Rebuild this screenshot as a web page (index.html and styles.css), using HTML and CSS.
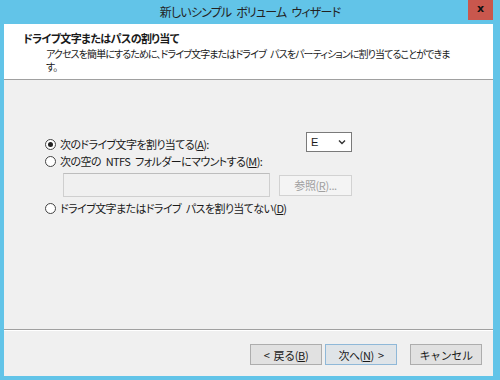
FILE: index.html
```html
<!DOCTYPE html>
<html lang="ja">
<head>
  <meta charset="UTF-8">
  <title>新しいシンプル ボリューム ウィザード</title>
  <link rel="stylesheet" href="styles.css">
</head>
<body>
  <div class="window">
    <div class="titlebar">
      <span></span>
      <span class="title">新しいシンプル ボリューム ウィザード</span>
      <span class="close">x</span>
    </div>
    <div class="content">
      <header class="page-head">
        <h1>ドライブ文字またはパスの割り当て</h1>
        <p>アクセスを簡単にするために、ドライブ文字またはドライブ パスをパーティションに割り当てることができます。</p>
      </header>
      <main class="options">
        <div class="row row-letter">
          <label class="opt"><span class="radio checked"></span>次のドライブ文字を割り当てる(<u>A</u>):</label>
          <div class="select">E<svg width="8" height="6" viewBox="0 0 8 6"><path d="M1 1.5 L4 4.5 L7 1.5" fill="none" stroke="#333" stroke-width="1.4"/></svg></div>
        </div>
        <div class="row">
          <label class="opt"><span class="radio"></span>次の空の NTFS フォルダーにマウントする(<u>M</u>):</label>
        </div>
        <div class="row row-path">
          <div class="field"></div>
          <button class="btn disabled">参照(<u>R</u>)...</button>
        </div>
        <div class="row row-none">
          <label class="opt"><span class="radio"></span>ドライブ文字またはドライブ パスを割り当てない(<u>D</u>)</label>
        </div>
      </main>
      <footer class="actions">
        <button class="btn">&lt; 戻る(<u>B</u>)</button>
        <button class="btn default">次へ(<u>N</u>) &gt;</button>
        <button class="btn cancel">キャンセル</button>
      </footer>
    </div>
  </div>
</body>
</html>
```

FILE: styles.css
```css
body {
  margin: 0;
  font-family: "Noto Sans CJK JP", "Noto Sans", sans-serif;
  font-feature-settings: "palt";
  color: #1a1a1a;
}

.window {
  width: 500px;
  height: 380px;
  background-color: #62c4e8;
  padding: 0 7px 4px 4px;
  box-sizing: border-box;
  display: flex;
  flex-direction: column;
}

.titlebar {
  height: 24px;
  display: grid;
  grid-template-columns: 1fr auto 1fr;
  align-items: start;
  margin-left: -4px;
  margin-right: -7px;
}

.title {
  font-size: 12px;
  letter-spacing: -0.8px;
  word-spacing: 3px;
  line-height: 24px;
  color: #222;
}

.close {
  justify-self: end;
  margin-right: 7px;
  width: 25px;
  height: 20px;
  background-color: #c9574d;
  color: #111;
  font-family: "DejaVu Sans", sans-serif;
  font-weight: bold;
  font-size: 11px;
  line-height: 18px;
  text-align: center;
}

.content {
  flex: 1;
  display: flex;
  flex-direction: column;
  background-color: #f0f0f0;
}

.page-head {
  background-color: #fff;
  height: 56px;
  padding: 7px 0 0 19px;
  box-sizing: border-box;
  border-bottom: 1px solid #a0a0a0;
}

.page-head h1 {
  margin: 0;
  font-size: 11px;
  letter-spacing: -0.6px;
  line-height: 15px;
  font-weight: bold;
}

.page-head p {
  margin: 1px 0 0 23px;
  width: 404px;
  font-size: 10px;
  letter-spacing: -0.9px;
  word-spacing: 3px;
  line-height: 13px;
}

.options {
  flex: 1;
  padding: 52px 0 0 41px;
  font-size: 11px;
  letter-spacing: -0.6px;
  word-spacing: 3px;
}

.row {
  display: flex;
  align-items: center;
}

.row-letter {
  height: 20px;
}

.row-letter .opt {
  width: 261px;
  padding-top: 4px;
}

.opt {
  display: flex;
  align-items: center;
  line-height: 16px;
  height: 16px;
}

.radio {
  width: 9px;
  height: 9px;
  border: 1px solid #444;
  border-radius: 50%;
  background-color: #fff;
  margin-right: 4px;
  display: flex;
  align-items: center;
  justify-content: center;
}

.radio.checked::after {
  content: "";
  width: 5px;
  height: 5px;
  border-radius: 50%;
  background-color: #222;
}

.select {
  width: 46px;
  height: 20px;
  box-sizing: border-box;
  border: 1px solid #7a7a7a;
  background-color: #fff;
  display: flex;
  align-items: center;
  justify-content: space-between;
  padding: 0 5px 0 4px;
  font-family: "Liberation Sans", sans-serif;
  font-size: 11px;
  letter-spacing: 0;
}

.row-letter + .row {
  margin-top: 1px;
}

.row-path {
  margin-top: 4px;
  padding-left: 18px;
  gap: 9px;
}

.field {
  width: 207px;
  height: 24px;
  box-sizing: border-box;
  border: 1px solid #cfcfcf;
  border-top-color: #bdbdbd;
}

.row-none {
  margin-top: 3px;
}

.btn {
  width: 72px;
  height: 21px;
  padding: 0;
  font-family: inherit;
  font-size: 11px;
  letter-spacing: -0.4px;
  word-spacing: 2px;
  color: #1a1a1a;
  background-color: #e1e1e1;
  border: 1px solid #adadad;
}

.btn.disabled {
  width: 73px;
  color: #a0a0a0;
  background-color: #f4f4f4;
  border-color: #d2d2d2;
}

.btn.default {
  background-color: #dfe4e8;
  border-color: #8fb8d8;
}

.actions {
  border-top: 1px solid #a0a0a0;
  box-shadow: inset 0 1px 0 #fff;
  height: 47px;
  box-sizing: border-box;
  display: flex;
  justify-content: flex-end;
  align-items: flex-start;
  padding: 14px 11px 0 0;
  gap: 3px;
}

.actions .cancel {
  margin-left: 10px;
}
```
